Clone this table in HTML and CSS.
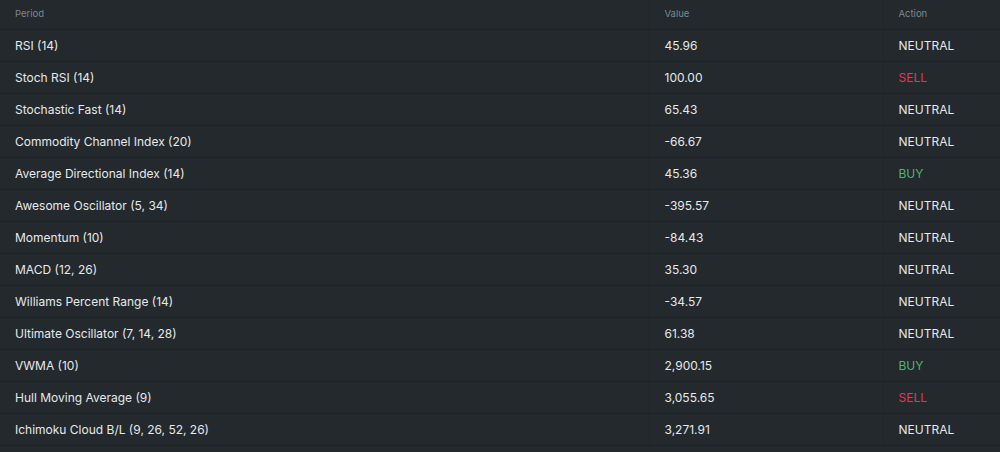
FILE: index.html
```html
<!DOCTYPE html>
<html>
<head>
<meta charset="utf-8">
<link rel="stylesheet" href="styles.css">
</head>
<body>
<table class="tbl">
  <thead>
    <tr><th>Period</th><th>Value</th><th>Action</th></tr>
  </thead>
  <tbody>
    <tr><td>RSI (14)</td><td>45.96</td><td class="neutral">NEUTRAL</td></tr>
    <tr><td>Stoch RSI (14)</td><td>100.00</td><td class="sell">SELL</td></tr>
    <tr><td>Stochastic Fast (14)</td><td>65.43</td><td class="neutral">NEUTRAL</td></tr>
    <tr><td>Commodity Channel Index (20)</td><td>-66.67</td><td class="neutral">NEUTRAL</td></tr>
    <tr><td>Average Directional Index (14)</td><td>45.36</td><td class="buy">BUY</td></tr>
    <tr><td>Awesome Oscillator (5, 34)</td><td>-395.57</td><td class="neutral">NEUTRAL</td></tr>
    <tr><td>Momentum (10)</td><td>-84.43</td><td class="neutral">NEUTRAL</td></tr>
    <tr><td>MACD (12, 26)</td><td>35.30</td><td class="neutral">NEUTRAL</td></tr>
    <tr><td>Williams Percent Range (14)</td><td>-34.57</td><td class="neutral">NEUTRAL</td></tr>
    <tr><td>Ultimate Oscillator (7, 14, 28)</td><td>61.38</td><td class="neutral">NEUTRAL</td></tr>
    <tr><td>VWMA (10)</td><td>2,900.15</td><td class="buy">BUY</td></tr>
    <tr><td>Hull Moving Average (9)</td><td>3,055.65</td><td class="sell">SELL</td></tr>
    <tr><td>Ichimoku Cloud B/L (9, 26, 52, 26)</td><td>3,271.91</td><td class="neutral">NEUTRAL</td></tr>
  </tbody>
</table>
</body>
</html>
```
FILE: styles.css
```css
html, body {
  margin: 0;
  padding: 0;
  background: #23292d;
  font-family: Inter, "Noto Sans", sans-serif;
  color: #e6e8ea;
}
.tbl {
  width: 1000px;
  border-collapse: collapse;
  table-layout: fixed;
}
.tbl th, .tbl td { box-sizing: border-box; }
.tbl th:nth-child(1) { width: 649px; }
.tbl th:nth-child(2) { width: 234px; }
.tbl th:nth-child(3) { width: 117px; }
.tbl th {
  height: 29px;
  padding: 0 15px 2px;
  text-align: left;
  font-weight: 400;
  font-size: 9.5px;
  color: #80878c;
  border-bottom: 1px solid #1d2226;
}
.tbl td {
  height: 32px;
  padding: 0 15px;
  font-size: 12px;
  border-bottom: 1px solid #1d2226;
}
.tbl th + th, .tbl td + td {
  border-left: 1px solid #1f2529;
}
.neutral { color: #e6e8ea; }
.sell { color: #ec3450; }
.buy { color: #4bb86e; }
```
